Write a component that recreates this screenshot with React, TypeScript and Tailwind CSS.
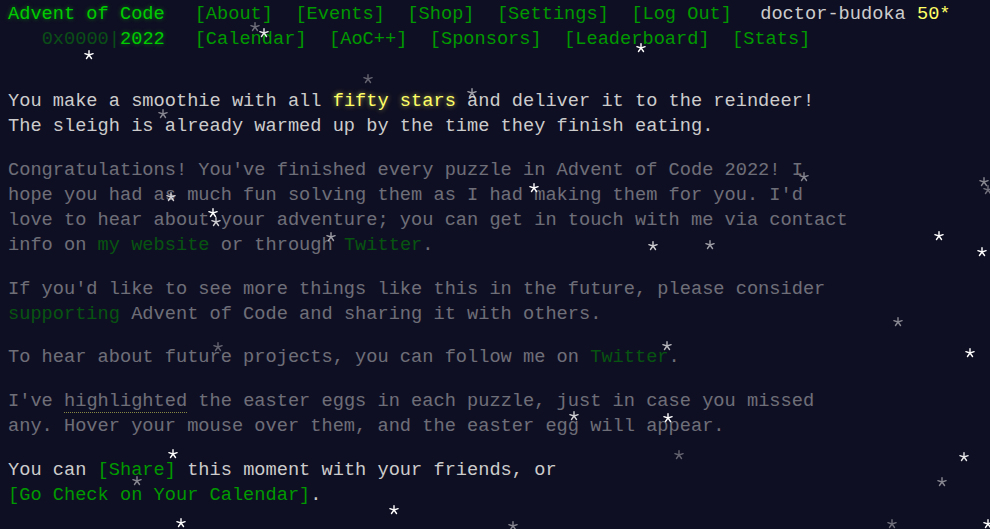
import React from "react";

const stars: [number, number, number][] = [
  [255, 27, 0.4], [264, 33, 0.9], [89, 55, 1], [641, 48, 1], [368, 79, 0.35],
  [472, 93, 0.6], [163, 114, 0.5], [171, 197, 0.8], [213, 213, 1], [216, 222, 0.8],
  [331, 237, 0.6], [804, 177, 0.5], [984, 182, 0.5], [988, 190, 0.4], [534, 188, 1],
  [653, 246, 0.8], [710, 245, 0.6], [939, 236, 1], [982, 252, 1], [218, 347, 0.35],
  [173, 454, 1], [137, 481, 0.5], [394, 510, 1], [181, 523, 1], [898, 322, 0.5],
  [970, 353, 1], [667, 346, 0.7], [574, 416, 0.8], [668, 418, 1], [679, 455, 0.35],
  [964, 457, 0.9], [942, 482, 0.5], [513, 526, 0.5], [892, 524, 0.4], [988, 524, 1],
];

function Star({ x, y, o }: { x: number; y: number; o: number }) {
  const arms = [-90, -18, 54, 126, 198];
  return (
    <svg
      className="absolute pointer-events-none"
      style={{ left: x - 6, top: y - 6, opacity: o }}
      width={12}
      height={12}
      viewBox="-6 -6 12 12"
    >
      {arms.map((a) => {
        const r = (a * Math.PI) / 180;
        return (
          <line
            key={a}
            x1={0}
            y1={0}
            x2={4.3 * Math.cos(r)}
            y2={4.3 * Math.sin(r)}
            stroke="#ffffff"
            strokeWidth={1.4}
            strokeLinecap="round"
          />
        );
      })}
    </svg>
  );
}

const navItem = "px-[11.2px] text-[#009900]";

export default function App() {
  return (
    <div
      className="relative min-h-screen h-[529px] overflow-hidden bg-[#0f0f23] text-[#cccccc] text-[18.6667px] leading-[25px] pl-[8px] pt-[2px]"
      style={{ fontFamily: '"Liberation Mono", "DejaVu Sans Mono", monospace' }}
    >
      <header className="whitespace-nowrap mb-[37.33px]">
        <div className="flex h-[25px] items-center">
          <h1 className="font-normal w-[156.8px] mr-[18.67px] text-[#00cc00] [text-shadow:0_0_4px_rgba(0,204,0,0.55)]">
            Advent of Code
          </h1>
          <nav className="flex">
            <span className={navItem}>[About]</span>
            <span className={navItem}>[Events]</span>
            <span className={navItem}>[Shop]</span>
            <span className={navItem}>[Settings]</span>
            <span className={navItem}>[Log Out]</span>
          </nav>
          <div className="ml-[17px]">
            doctor-budoka <span className="text-[#ffff66]">50*</span>
          </div>
        </div>
        <div className="flex h-[25px] items-center">
          <h1 className="font-normal w-[156.8px] mr-[18.67px] text-right text-[#00cc00]">
            <span className="opacity-[0.33]">0x0000|</span>
            <span className="[text-shadow:0_0_4px_rgba(0,204,0,0.55)]">2022</span>
          </h1>
          <nav className="flex">
            <span className={navItem}>[Calendar]</span>
            <span className={navItem}>[AoC++]</span>
            <span className={navItem}>[Sponsors]</span>
            <span className={navItem}>[Leaderboard]</span>
            <span className={navItem}>[Stats]</span>
          </nav>
        </div>
      </header>

      <main className="whitespace-nowrap">
        <p className="mb-[18.67px]">
          You make a smoothie with all{" "}
          <span className="text-[#ffff66] [text-shadow:0_0_5px_rgba(255,255,102,0.6)]">fifty stars</span> and deliver it to the reindeer!
          <br />
          The sleigh is already warmed up by the time they finish eating.
        </p>
        <p className="mb-[18.67px] opacity-50">
          Congratulations! You've finished every puzzle in Advent of Code 2022! I
          <br />
          hope you had as much fun solving them as I had making them for you. I'd
          <br />
          love to hear about your adventure; you can get in touch with me via contact
          <br />
          info on <span className="text-[#009900]">my website</span> or through{" "}
          <span className="text-[#009900]">Twitter</span>.
        </p>
        <p className="mb-[18.67px] opacity-50">
          If you'd like to see more things like this in the future, please consider
          <br />
          <span className="text-[#009900]">supporting</span> Advent of Code and sharing it with others.
        </p>
        <p className="mb-[18.67px] opacity-50">
          To hear about future projects, you can follow me on{" "}
          <span className="text-[#009900]">Twitter</span>.
        </p>
        <p className="mb-[18.67px] opacity-50">
          I've{" "}
          <span className="border-b border-dotted border-[#ffff66]">highlighted</span> the easter eggs in each puzzle, just in case you missed
          <br />
          any. Hover your mouse over them, and the easter egg will appear.
        </p>
        <p className="mb-[18.67px]">
          You can <span className="text-[#009900]">[Share]</span> this moment with your friends, or
          <br />
          <span className="text-[#009900]">[Go Check on Your Calendar]</span>.
        </p>
      </main>

      {stars.map(([x, y, o], i) => (
        <Star key={i} x={x} y={y} o={o} />
      ))}
    </div>
  );
}
